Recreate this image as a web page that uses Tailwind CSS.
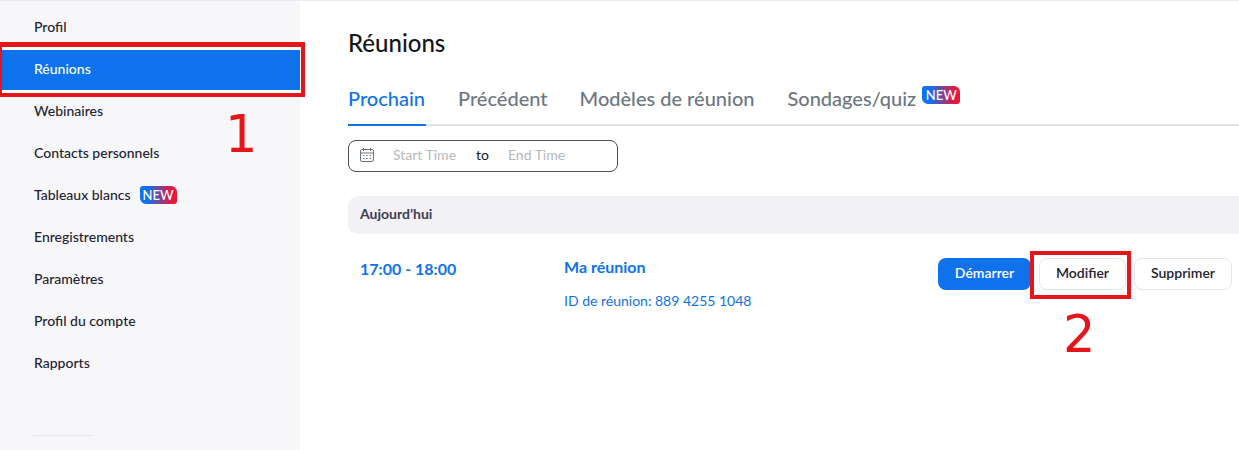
<!DOCTYPE html>
<html lang="fr">
  <head>
    <meta charset="UTF-8" />
    <title>Réunions</title>
    <script src="https://cdn.jsdelivr.net/npm/@tailwindcss/browser@4"></script>
  </head>
  <body class="relative h-[450px] w-[1239px] overflow-hidden bg-white font-['Lato',sans-serif]">
    <div class="flex h-[450px] border-t border-[#ececf0]">
      <!-- menu -->
      <aside class="w-[300px] shrink-0 bg-[#f7f7fa] pt-[5px] text-sm font-medium text-[#232333]">
        <a class="flex h-[42px] items-center pl-[34px]">Profil</a>
        <a class="flex h-[42px] items-center bg-[#0e72ed] pl-[34px] text-white">Réunions</a>
        <a class="flex h-[42px] items-center pl-[34px]">Webinaires</a>
        <a class="flex h-[42px] items-center pl-[34px]">Contacts personnels</a>
        <a class="flex h-[42px] items-center pl-[34px]">
          Tableaux blancs
          <span class="ml-[9px] flex h-[18px] w-[37px] items-center justify-center rounded-tl-[3px] rounded-tr-[6px] rounded-br-[3px] rounded-bl-[6px] bg-linear-to-r/srgb from-[#0e72ed] from-20% to-[#e8173d] to-85% text-[13px] leading-none font-medium text-white">NEW</span>
        </a>
        <a class="flex h-[42px] items-center pl-[34px]">Enregistrements</a>
        <a class="flex h-[42px] items-center pl-[34px]">Paramètres</a>
        <a class="flex h-[42px] items-center pl-[34px]">Profil du compte</a>
        <a class="flex h-[42px] items-center pl-[34px]">Rapports</a>
        <div class="mt-[51px] ml-[33px] h-px w-[60px] bg-[#e3e3e6]"></div>
      </aside>

      <!-- contenu -->
      <main class="min-w-0 flex-1 pt-[26px] pl-[48px]">
        <h1 class="text-2xl leading-[32px] font-medium text-[#131619]">Réunions</h1>

        <div class="mt-[16px] flex h-[51px] gap-8 border-b-2 border-[#dfe3e8] text-xl font-medium text-[#6e7680]">
          <a class="-mb-[2px] h-[51px] w-[78px] border-b-2 border-[#0e72ed] pt-[9px] leading-[28px] text-[#0e72ed]">Prochain</a>
          <a class="pt-[9px] leading-[28px]">Précédent</a>
          <a class="pt-[9px] leading-[28px]">Modèles de réunion</a>
          <a class="ml-px flex items-start pt-[9px] leading-[28px]">
            Sondages/quiz
            <span class="mt-[2px] ml-[6px] flex h-[18px] w-[38px] items-center justify-center rounded-tl-[3px] rounded-tr-[6px] rounded-br-[3px] rounded-bl-[6px] bg-linear-to-r/srgb from-[#0e72ed] from-20% to-[#e8173d] to-85% text-[13px] leading-none font-medium text-white">NEW</span>
          </a>
        </div>

        <div class="mt-[14px] flex h-[32px] w-[270px] items-center rounded-lg border border-[#4a4f58] pb-[2px] pl-[10px] text-sm">
          <svg class="h-4 w-4 text-[#6e7680]" viewBox="0 0 16 16" fill="none" stroke="currentColor" stroke-width="1">
            <rect x="1.5" y="2.5" width="13" height="12" rx="1.5" />
            <path d="M1.5 6h13M4.5 1v3M11.5 1v3" />
            <path d="M4 8.5h1.5M7.2 8.5h1.5M10.5 8.5H12M4 11.5h1.5M7.2 11.5h1.5M10.5 11.5H12" />
          </svg>
          <span class="ml-[18px] w-[63px] whitespace-nowrap text-[#b5b8bd]">Start Time</span>
          <span class="ml-[20px] text-[#131619]">to</span>
          <span class="ml-[19px] whitespace-nowrap text-[#b5b8bd]">End Time</span>
        </div>

        <div class="mt-[24px] flex h-[38px] items-center rounded-l-[10px] bg-[#f1f1f6] pb-[2px] pl-3 text-sm font-bold text-[#3d3d4d]">Aujourd’hui</div>

        <div class="flex pt-[24px] pl-3">
          <div class="w-[204px] text-base leading-[22px] font-bold text-[#0e72ed]">17:00 - 18:00</div>
          <div class="w-[374px]">
            <div class="-mt-[1px] text-base leading-[20px] font-bold text-[#0e72ed]">Ma réunion</div>
            <div class="mt-[14px] text-sm leading-[20px] text-[#0e72ed]">ID de réunion: 889 4255 1048</div>
          </div>
          <div class="flex h-8 text-sm font-semibold">
            <button class="w-[93px] rounded-lg bg-[#0e72ed] pb-[2px] text-white">Démarrer</button>
            <button class="ml-[8px] w-[87px] rounded-lg border border-[#e4e4ed] pb-[2px] text-[#232333]">Modifier</button>
            <button class="ml-[8px] w-[98px] rounded-lg border border-[#e4e4ed] pb-[2px] text-[#232333]">Supprimer</button>
          </div>
        </div>
      </main>
    </div>

    <!-- annotations rouges -->
    <div class="absolute top-[42px] left-[-2px] h-[55px] w-[307px] border-[4px] border-t-[5px] border-[#e5161a]">
      <div class="h-full border-y-[3px] border-r border-white"></div>
    </div>
    <div class="absolute top-[100px] left-[225px] font-['DejaVu_Sans',sans-serif] text-[51px] leading-[70px] text-[#e5161a]">1</div>
    <div class="absolute top-[251px] left-[1030px] h-[48px] w-[101px] border-[4px] border-[#e5161a]"></div>
    <div class="absolute top-[300px] left-[1063px] font-['DejaVu_Sans',sans-serif] text-[51px] leading-[70px] text-[#e5161a]">2</div>
  </body>
</html>
